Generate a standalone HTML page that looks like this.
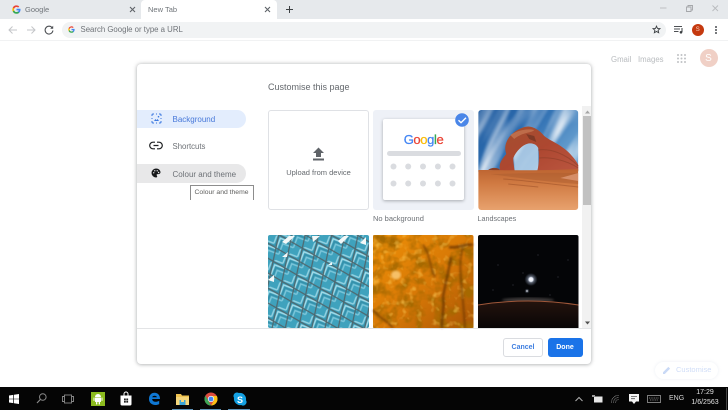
<!DOCTYPE html>
<html><head><meta charset="utf-8">
<style>
*{box-sizing:border-box}
html,body{margin:0;padding:0;width:728px;height:410px;overflow:hidden;background:#fff;font-family:"Liberation Sans",sans-serif;color:#5f6368}
#w{position:absolute;left:0;top:0;width:728px;height:410px;overflow:hidden;background:#fff;filter:blur(.3px)}
.a{position:absolute}
.t{position:absolute;white-space:nowrap;line-height:12px}
svg{position:absolute;overflow:visible}
</style></head><body><div id="w">
<div class="a" style="left:0;top:0;width:728px;height:19px;background:#e6e9ec"></div>
<div class="a" style="left:141px;top:0;width:136px;height:19px;background:#fff;border-radius:4px 4px 0 0"></div>
<div class="a" style="left:0;top:19px;width:728px;height:22px;background:#fff;border-bottom:1px solid #f1f2f3"></div>
<div class="a" style="left:62px;top:22px;width:604px;height:15.500px;background:#f1f3f4;border-radius:8px"></div>

<svg style="left:12px;top:5px" width="9" height="9" viewBox="0 0 18 18"><path d="M17 9.200c0-.6-.1-1.200-.2-1.700H9v3.300h4.500a3.800 3.800 0 0 1-1.700 2.500v2.100h2.700C16.100 13.900 17 11.800 17 9.200z" fill="#4285f4"/><path d="M9 17.500c2.300 0 4.200-.8 5.500-2.100l-2.700-2.100c-.7.500-1.700.8-2.800.8-2.200 0-4-1.500-4.700-3.400H1.500v2.200A8.500 8.500 0 0 0 9 17.500z" fill="#34a853"/><path d="M4.300 10.700a5 5 0 0 1 0-3.300V5.200H1.500a8.500 8.500 0 0 0 0 7.700z" fill="#fbbc05"/><path d="M9 3.900c1.200 0 2.300.4 3.200 1.300l2.400-2.400A8.500 8.500 0 0 0 1.500 5.200l2.800 2.200C5 5.400 6.800 3.900 9 3.900z" fill="#ea4335"/></svg>
<div class="t" style="left:25px;top:3.500px;font-size:7.500px;color:#70757a">Google</div>
<svg style="left:129px;top:6px" width="7" height="7" viewBox="0 0 7 7"><path d="M1 1l5 5M6 1L1 6" stroke="#5f6368" stroke-width="1.100"/></svg>
<div class="t" style="left:148px;top:3.500px;font-size:7.500px;color:#70757a">New Tab</div>
<svg style="left:264px;top:6px" width="7" height="7" viewBox="0 0 7 7"><path d="M1 1l5 5M6 1L1 6" stroke="#5f6368" stroke-width="1.100"/></svg>
<svg style="left:285px;top:5px" width="9" height="9" viewBox="0 0 9 9"><path d="M4.500 1v7M1 4.500h7" stroke="#3c4043" stroke-width="1"/></svg>

<svg style="left:660px;top:4px" width="60" height="10" viewBox="0 0 60 10"><path d="M0 4h6.500" stroke="#b9bbbe" stroke-width=".9"/><path d="M26.500 3h4.500v4.500h-4.500zM28 3V1.500h4.500V6H31" fill="none" stroke="#a4a6a9" stroke-width=".9"/><path d="M52.500 1.500l5.500 5.500M58 1.500l-5.500 5.500" stroke="#b9bbbe" stroke-width=".9"/></svg>

<svg style="left:8px;top:25px" width="10" height="10" viewBox="0 0 10 10"><path d="M9 5H1.500M4.500 1.500L1 5l3.500 3.500" fill="none" stroke="#c3c5c8" stroke-width="1"/></svg>
<svg style="left:26px;top:25px" width="10" height="10" viewBox="0 0 10 10"><path d="M1 5h7.500M5.500 1.500L9 5 5.500 8.500" fill="none" stroke="#c3c5c8" stroke-width="1"/></svg>
<svg style="left:44px;top:25px" width="10" height="10" viewBox="0 0 10 10"><path d="M8.300 3A3.900 3.900 0 1 0 8.900 5.500" fill="none" stroke="#4d5054" stroke-width="1.100"/><path d="M9.200 .8v3H6.200z" fill="#4d5054"/></svg>
<svg style="left:68px;top:26px" width="7" height="7" viewBox="0 0 18 18"><path d="M17 9.200c0-.6-.1-1.200-.2-1.700H9v3.300h4.500a3.800 3.800 0 0 1-1.700 2.500v2.100h2.700C16.100 13.900 17 11.800 17 9.200z" fill="#4285f4"/><path d="M9 17.500c2.300 0 4.200-.8 5.500-2.100l-2.700-2.100c-.7.500-1.700.8-2.800.8-2.200 0-4-1.500-4.700-3.400H1.500v2.200A8.500 8.500 0 0 0 9 17.500z" fill="#34a853"/><path d="M4.300 10.700a5 5 0 0 1 0-3.300V5.200H1.500a8.500 8.500 0 0 0 0 7.700z" fill="#fbbc05"/><path d="M9 3.900c1.200 0 2.300.4 3.200 1.300l2.400-2.400A8.500 8.500 0 0 0 1.500 5.200l2.800 2.200C5 5.400 6.800 3.900 9 3.900z" fill="#ea4335"/></svg>
<div class="t" style="left:80.500px;top:24px;font-size:7.800px;color:#6f7378">Search Google or type a URL</div>
<svg style="left:652px;top:25px" width="9" height="9" viewBox="0 0 24 24"><path d="M12 3l2.700 6.100 6.600.6-5 4.400 1.500 6.500L12 17.200l-5.800 3.400 1.500-6.500-5-4.400 6.600-.6z" fill="none" stroke="#3c4043" stroke-width="2.400"/></svg>
<svg style="left:674px;top:25px" width="10" height="9" viewBox="0 0 10 9"><path d="M0 1.500h8M0 4h6M0 6.500h4.500" stroke="#4d5054" stroke-width="1"/><path d="M8 3v4" stroke="#3c4043" stroke-width="1"/><circle cx="7" cy="7.300" r="1.300" fill="#3c4043"/></svg>
<div class="a" style="left:691.500px;top:23.500px;width:12.500px;height:12.500px;border-radius:50%;background:#c5390f"></div>
<div class="t" style="left:691.500px;top:24px;width:12.500px;text-align:center;font-size:6px;color:#f6d6c8">S</div>
<div class="a" style="left:714.500px;top:26px;width:2px;height:2px;border-radius:50%;background:#4d5054;box-shadow:0 3px 0 #4d5054,0 6px 0 #4d5054"></div>

<div class="t" style="left:611px;top:53.500px;font-size:7.800px;color:#b9bcbf">Gmail</div>
<div class="t" style="left:638px;top:53.500px;font-size:7.800px;color:#b9bcbf">Images</div>
<svg style="left:677px;top:54px" width="9" height="9" viewBox="0 0 9 9" fill="#c0c2c5"><circle cx="1" cy="1" r="1"/><circle cx="4.500" cy="1" r="1"/><circle cx="8" cy="1" r="1"/><circle cx="1" cy="4.500" r="1"/><circle cx="4.500" cy="4.500" r="1"/><circle cx="8" cy="4.500" r="1"/><circle cx="1" cy="8" r="1"/><circle cx="4.500" cy="8" r="1"/><circle cx="8" cy="8" r="1"/></svg>
<div class="a" style="left:699.500px;top:49px;width:18px;height:18px;border-radius:50%;background:#f0d0c6"></div>
<div class="t" style="left:699.500px;top:52.500px;width:18px;text-align:center;font-size:10px;color:#fff">S</div>

<div class="a" style="left:655px;top:361.500px;width:63px;height:17px;border-radius:9px;background:#fff;box-shadow:0 0 3px rgba(190,200,220,.3)"></div>
<svg style="left:663px;top:365.500px" width="8" height="8" viewBox="0 0 9 9"><path d="M0 9V7L6 1l2 2-6 6z" fill="#c9d9f6"/></svg>
<div class="t" style="left:676px;top:364px;font-size:7.500px;color:#d0ddf7">Customise</div>

<!-- Dialog -->
<div class="a" style="left:137px;top:64px;width:454px;height:299.500px;background:#fff;border-radius:4px;box-shadow:0 0 4px rgba(60,64,67,.35),0 1px 3px rgba(60,64,67,.15)"></div>
<div class="t" style="left:268px;top:81px;font-size:9px;color:#65696e">Customise this page</div>

<div class="a" style="left:137px;top:109.500px;width:109px;height:18.500px;background:#e3edfd;border-radius:0 10px 10px 0"></div>
<svg style="left:150.500px;top:113px" width="11" height="11" viewBox="0 0 11 11"><path d="M3 1H2a1 1 0 0 0-1 1v1M8 1h1a1 1 0 0 1 1 1v1M3 10H2a1 1 0 0 1-1-1V8M8 10h1a1 1 0 0 0 1-1V8M5 1h1M5 10h1M1 5v1M10 5v1" fill="none" stroke="#3b78e0" stroke-width="1"/><path d="M3 8l1.500-2 1 1.200L6.500 6 8 8z" fill="#3b78e0"/><circle cx="7.500" cy="3.700" r=".8" fill="#3b78e0"/></svg>
<div class="t" style="left:172.500px;top:114px;font-size:8px;color:#4778d9">Background</div>

<svg style="left:150px;top:141px" width="12" height="9" viewBox="0 0 12 9"><path d="M5 1.200H3a3.300 3.300 0 0 0 0 6.600h2M7 1.200h2a3.300 3.300 0 0 1 0 6.600H7M3.500 4.500h5" fill="none" stroke="#1f2123" stroke-width="1.200"/></svg>
<div class="t" style="left:172.500px;top:140.500px;font-size:7.800px;color:#6d7176">Shortcuts</div>

<div class="a" style="left:137px;top:164px;width:109px;height:18.500px;background:#e8e8e9;border-radius:0 10px 10px 0"></div>
<svg style="left:151px;top:168px" width="10" height="10" viewBox="0 0 10 10"><path d="M5 .5a4.500 4.500 0 0 0 0 9c.8 0 1.200-.5 1.200-1 0-.8-.6-.9-.6-1.500 0-.5.4-.9 1-.9h1.100c1 0 1.800-.8 1.800-1.800C9.500 2.200 7.500.5 5 .5z" fill="#17181a"/><circle cx="2.700" cy="4.800" r=".7" fill="#e8e8e9"/><circle cx="3.800" cy="2.800" r=".7" fill="#e8e8e9"/><circle cx="6.200" cy="2.800" r=".7" fill="#e8e8e9"/><circle cx="7.600" cy="4.500" r=".7" fill="#e8e8e9"/></svg>
<div class="t" style="left:172.500px;top:169px;font-size:8px;color:#6d7176">Colour and theme</div>
<div class="a" style="left:190px;top:185px;width:64px;height:15px;background:#fff;border:1px solid #8d8d8d;border-bottom:none"></div>
<div class="t" style="left:194.500px;top:186.500px;font-size:6.800px;color:#60605f">Colour and theme</div>

<!-- Upload -->
<div class="a" style="left:268px;top:109.500px;width:101px;height:100px;background:#fff;border:1px solid #dfe1e5;border-radius:3px"></div>
<svg style="left:312px;top:147px" width="13" height="14" viewBox="0 0 13 14"><path d="M6.500 .5L12 6H9v4H4V6H1z" fill="#5f6368"/><rect x="1" y="11.500" width="11" height="2" fill="#5f6368"/></svg>
<div class="t" style="left:268px;top:167px;width:101px;text-align:center;font-size:7.500px;color:#65696e">Upload from device</div>

<!-- No background -->
<div class="a" style="left:373px;top:109.500px;width:100.500px;height:100px;background:#eef1f7;border-radius:3px"></div>
<div class="a" style="left:383px;top:118.500px;width:81px;height:81px;background:#fff;border-radius:2px;box-shadow:0 1px 3px rgba(60,64,67,.4)"></div>
<div class="t" style="left:383px;top:131.500px;width:81px;text-align:center;font-size:13px;line-height:15px;letter-spacing:-.4px;-webkit-text-stroke:.25px currentColor"><span style="color:#4285f4">G</span><span style="color:#ea4335">o</span><span style="color:#fbbc05">o</span><span style="color:#4285f4">g</span><span style="color:#34a853">l</span><span style="color:#ea4335">e</span></div>
<div class="a" style="left:387px;top:151px;width:73.500px;height:5px;background:#dadce0;border-radius:3px"></div>
<svg style="left:390px;top:163px" width="66" height="24" viewBox="0 0 66 24" fill="#dadce0"><circle cx="3.500" cy="3.500" r="3"/><circle cx="18.200" cy="3.500" r="3"/><circle cx="33" cy="3.500" r="3"/><circle cx="47.900" cy="3.500" r="3"/><circle cx="62.500" cy="3.500" r="3"/><circle cx="3.500" cy="20.500" r="3"/><circle cx="18.200" cy="20.500" r="3"/><circle cx="33" cy="20.500" r="3"/><circle cx="47.900" cy="20.500" r="3"/><circle cx="62.500" cy="20.500" r="3"/></svg>
<svg style="left:454.500px;top:113px" width="14" height="14" viewBox="0 0 14 14"><circle cx="7" cy="7" r="6.800" fill="#4a86e8"/><path d="M3.500 7.300l2.500 2.400 5-5" fill="none" stroke="#fff" stroke-width="1.400"/></svg>
<div class="t" style="left:373px;top:212.500px;font-size:7.500px;color:#6d7176">No background</div>

<!-- Landscapes -->
<svg style="left:477.500px;top:109.500px" width="100.500" height="100" viewBox="0 0 100 100">
<defs>
<linearGradient id="sky" x1="0" y1="0" x2="1" y2=".6"><stop offset="0" stop-color="#1f5a9e"/><stop offset=".5" stop-color="#2f6fb2"/><stop offset="1" stop-color="#6ba3d2"/></linearGradient>
<linearGradient id="sand" x1="0" y1="0" x2="0" y2="1"><stop offset="0" stop-color="#bd6431"/><stop offset=".35" stop-color="#d07a42"/><stop offset="1" stop-color="#e8a26e"/></linearGradient>
<linearGradient id="rock" x1="0" y1="0" x2="1" y2="1"><stop offset="0" stop-color="#a2502f"/><stop offset=".5" stop-color="#ad4730"/><stop offset="1" stop-color="#bb5640"/></linearGradient>
<clipPath id="r3"><rect width="100" height="100" rx="3"/></clipPath>
<filter id="cl" x="0" y="0" width="100%" height="100%"><feTurbulence type="fractalNoise" baseFrequency=".014 .07" numOctaves="2" seed="4"/><feColorMatrix values="0 0 0 0 1  0 0 0 0 1  0 0 0 0 1  2 0 0 0 -.8"/></filter>
<filter id="bs"><feGaussianBlur stdDeviation=".7"/></filter>
</defs>
<g clip-path="url(#r3)">
<rect width="100" height="62" fill="url(#sky)"/>
<g transform="rotate(-62 50 30)" filter="url(#bs)"><rect x="-30" y="-50" width="160" height="170" filter="url(#cl)"/></g>
<rect x="36" y="33" width="24" height="28" fill="#c5dcef" opacity=".75"/>
<path d="M22 61C20 54 23 50 28 44C26 38 27 33 31 27C36 21 43 17 50 16.500C56 17 61 20 66 26C72 31 80 33 90 42C95 47 99 52 101 57V61H59C61 54 61 44 60 38C58 34 54 33 50 33.500C44 35 38 41 35 48C35 53 36 58 36.500 61z" fill="url(#rock)"/>
<path d="M32 25C38 21 48 18 56 20C54 23 44 22 36 29z" fill="#c77a55" opacity=".7"/>
<path d="M48 24l8 2 2 6-7-3z" fill="#6d3322" opacity=".7"/>
<path d="M60 40C72 38 88 44 100 56M61 48C72 47 88 50 100 58" stroke="#8c3d28" stroke-width="1" fill="none" opacity=".6"/>
<path d="M10 60c2-2 7-3 11-1l1 2z" fill="#8a4028"/>
<path d="M0 60C20 60 60 61 100 59V100H0z" fill="url(#sand)"/>
<path d="M12 64C30 64 55 62 100 63L100 74C70 72 40 68 12 64z" fill="#a85a2e" opacity=".45"/>
<path d="M25 69C45 70 70 74 100 77M30 74C40 75 50 76 60 77" stroke="#9c5028" stroke-width="1" fill="none" opacity=".55"/>
<path d="M82 68l18-5v8z" fill="#e9a98a" opacity=".6"/>
</g></svg>
<div class="t" style="left:477.500px;top:212.500px;font-size:7.200px;color:#6d7176">Landscapes</div>

<!-- Blue pattern -->
<svg style="left:268px;top:235px" width="101" height="93" viewBox="0 0 101 93">
<defs>
<pattern id="dia" width="16" height="22" patternUnits="userSpaceOnUse" patternTransform="rotate(-24) translate(2 4)">
<rect width="16" height="22" fill="#3fa2bd"/>
<g fill="none" stroke-width="1.500">
<path d="M0 6L8-2 16 6" stroke="#93d2e2"/><path d="M0 9L8 1 16 9" stroke="#358fa9"/><path d="M0 12L8 4 16 12" stroke="#a5dce9"/><path d="M0 15L8 7 16 15" stroke="#358fa9"/><path d="M0 18L8 10 16 18" stroke="#7cc6da"/>
</g>
<path d="M0 11L8 0 16 11 8 22z" fill="none" stroke="#4f676d" stroke-width="1.200"/>
<path d="M0-11L8 0M16-11L8 0M0 33L8 22M16 33L8 22" stroke="#4f676d" stroke-width="1.200"/>
</pattern>
<filter id="org" x="0" y="0" width="100%" height="100%"><feTurbulence type="fractalNoise" baseFrequency=".08" numOctaves="3" seed="8"/><feColorMatrix values="0 0 0 0 .38  0 0 0 0 .14  0 0 0 0 0  3 0 0 0 -1.250"/></filter>
<filter id="org2" x="0" y="0" width="100%" height="100%"><feTurbulence type="fractalNoise" baseFrequency=".14" numOctaves="2" seed="3"/><feColorMatrix values="0 0 0 0 .98  0 0 0 0 .62  0 0 0 0 .1  1.800 0 0 0 -1"/></filter>
<filter id="bl"><feGaussianBlur stdDeviation="1.100"/></filter>
<radialGradient id="glow"><stop offset="0" stop-color="#fff"/><stop offset=".3" stop-color="#e7ecf7"/><stop offset=".5" stop-color="#a8b4cc" stop-opacity=".5"/><stop offset="1" stop-color="#8fa0c0" stop-opacity="0"/></radialGradient>
<linearGradient id="or" x1="0" y1="0" x2="1" y2="1"><stop offset="0" stop-color="#ee9008"/><stop offset=".55" stop-color="#d67706"/><stop offset="1" stop-color="#a85404"/></linearGradient>
<linearGradient id="gd" x1="0" y1="0" x2="0" y2="1"><stop offset="0" stop-color="#24130d"/><stop offset="1" stop-color="#080506"/></linearGradient>
</defs>
<rect width="101" height="93" rx="2" fill="url(#dia)"/>
<path d="M14 7l7-6h6l-9 8zM44 1h8l-7 6zM70 6l6-5h5l-8 8zM92 8l6-6v8zM0 45l6-5 0 7zM14 22l6-5-1 5zM60 30l4-3v3z" fill="#f4f8f8"/>
</svg>

<!-- Orange -->
<svg style="left:373px;top:235px" width="100.500" height="93" viewBox="0 0 100.500 93">
<rect width="100.500" height="93" rx="2" fill="url(#or)"/>
<rect width="100.500" height="93" filter="url(#org)"/>
<rect width="100.500" height="93" filter="url(#org2)"/>
<g fill="none" stroke="#5a2a04" filter="url(#bl)" opacity=".75"><path d="M78 22C76 35 72 50 70 62C72 72 68 84 69 93" stroke-width="2.200"/><path d="M90 12C84 30 90 55 92 93" stroke-width="1.500"/><path d="M50 10C58 20 56 32 62 42" stroke-width="1.500"/><path d="M0 75C8 84 14 86 20 93" stroke-width="1.500"/><path d="M76 12C84 14 92 8 100 10" stroke-width="2.500"/></g>
<ellipse cx="23" cy="40" rx="5" ry="4.500" fill="#f6c067" filter="url(#bl)"/>
</svg>

<!-- Dark -->
<svg style="left:477.500px;top:235px" width="100.500" height="93" viewBox="0 0 100.500 93">
<rect width="100.500" height="93" rx="2" fill="#040507"/>
<g fill="#7f889c"><circle cx="20" cy="30" r=".4"/><circle cx="35" cy="50" r=".4"/><circle cx="60" cy="20" r=".4"/><circle cx="80" cy="42" r=".4"/><circle cx="45" cy="38" r=".4"/><circle cx="72" cy="60" r=".4"/><circle cx="15" cy="55" r=".4"/><circle cx="90" cy="25" r=".4"/></g>
<circle cx="53" cy="44.500" r="6.500" fill="url(#glow)"/>
<circle cx="49" cy="56" r="2.500" fill="url(#glow)" opacity=".7"/>
<ellipse cx="50" cy="65" rx="26" ry="2.500" fill="#b8aaa6" opacity=".3" filter="url(#bl)"/>
<path d="M0 70Q50 62 100.500 70V93H0z" fill="url(#gd)"/>
<path d="M0 70Q50 62 100.500 70" fill="none" stroke="#a0583a" stroke-width="1"/>
</svg>

<!-- Scrollbar -->
<div class="a" style="left:582px;top:106px;width:9px;height:222px;background:#f1f1f1"></div>
<div class="a" style="left:583px;top:116px;width:8px;height:89px;background:#c1c1c1"></div>
<svg style="left:584.500px;top:109.500px" width="5" height="4"><path d="M2.500 0.500L5 3.500H0z" fill="#a5a5a5"/></svg>
<svg style="left:584.500px;top:321px" width="5" height="4"><path d="M0 .5H5L2.500 3.500z" fill="#505050"/></svg>

<!-- footer -->
<div class="a" style="left:137px;top:328px;width:454px;height:1px;background:#e3e4e6"></div>
<div class="a" style="left:503px;top:337.500px;width:40px;height:19px;background:#fff;border:1px solid #dadce0;border-radius:3px"></div>
<div class="t" style="left:503px;top:341.500px;width:40px;text-align:center;font-size:7px;font-weight:bold;color:#3f7fe0">Cancel</div>
<div class="a" style="left:547.500px;top:337.500px;width:35px;height:19px;background:#1a73e8;border-radius:3px"></div>
<div class="t" style="left:547.500px;top:341.500px;width:35px;text-align:center;font-size:7px;font-weight:bold;color:#fff">Done</div>

<!-- Taskbar -->
<div class="a" style="left:0;top:387px;width:728px;height:23px;background:#050505"></div>
<svg style="left:9px;top:394px" width="10" height="10" viewBox="0 0 10 10" fill="#fff"><path d="M0 1.500L4.300.9v3.800H0zM5 .8L10 0v4.700H5zM0 5.300h4.300v3.800L0 8.500zM5 5.300h5V10L5 9.200z"/></svg>
<svg style="left:36px;top:393px" width="11" height="11" viewBox="0 0 11 11"><circle cx="6.800" cy="4" r="3.300" fill="none" stroke="#8a8a8a" stroke-width="1"/><path d="M4.300 6.500L1 10" stroke="#8a8a8a" stroke-width="1.200"/></svg>
<svg style="left:62px;top:394px" width="12" height="10" viewBox="0 0 12 10" fill="none" stroke="#8a8a8a" stroke-width=".9"><rect x="2.500" y="1" width="7" height="8"/><path d="M2.500 2.500H.5v5h2M9.500 2.500h2v5h-2"/></svg>
<div class="a" style="left:90.500px;top:392px;width:14px;height:14px;background:#8cbb1e"></div>
<svg style="left:92.500px;top:393px" width="10" height="12" viewBox="0 0 10 12" fill="#fff"><path d="M2 4a3 3 0 0 1 6 0z"/><rect x="2" y="4.500" width="6" height="4.500" rx=".5"/><rect x=".5" y="4.500" width="1" height="3.500" rx=".5"/><rect x="8.500" y="4.500" width="1" height="3.500" rx=".5"/><rect x="3" y="9" width="1.300" height="2.500" rx=".5"/><rect x="5.700" y="9" width="1.300" height="2.500" rx=".5"/></svg>
<svg style="left:119.500px;top:392px" width="12" height="14" viewBox="0 0 12 14"><path d="M4 3.500V2a2 2 0 0 1 4 0v1.500" fill="none" stroke="#fff" stroke-width="1"/><path d="M.5 3.500h11V12a1.500 1.500 0 0 1-1.500 1.500H2A1.500 1.500 0 0 1 .5 12z" fill="#fff"/><path d="M4 6.500h1.800v1.800H4zM6.300 6.500h1.800v1.800H6.300zM4 8.800h1.800v1.800H4zM6.300 8.800h1.800v1.800H6.300z" fill="#222"/></svg>
<svg style="left:148px;top:392px" width="13" height="14" viewBox="0 0 13 14"><path d="M1 7C1 3 3.500.8 6.500.8c3.500 0 5.500 2.500 5.500 6.200H4.200c0 2.800 3.800 3.700 7 1.800v3.300c-4 2-10.200.7-10.200-5.100zM4.200 5.200h4.700C8.800 3.300 4.600 3.200 4.200 5.200z" fill="#0f78d4"/></svg>
<svg style="left:176px;top:393px" width="13" height="12" viewBox="0 0 13 12"><path d="M0 1h5l1 1.500h7V12H0z" fill="#f0c350"/><rect x="0" y="4" width="13" height="8" fill="#f5d67b"/><rect x="3.500" y="7" width="6" height="5" fill="#3ba5d8"/><rect x="5" y="7" width="3" height="2" fill="#f5d67b"/></svg>
<svg style="left:204px;top:392px" width="14" height="14" viewBox="0 0 14 14"><circle cx="7" cy="7" r="6.500" fill="#dd4b3e"/><path d="M7 13.500A6.500 6.500 0 0 1 1.400 3.700L4.500 9z" fill="#3aa757"/><path d="M13.500 7A6.500 6.500 0 0 1 7 13.500L10 8.500 7 4h5.800c.5.900.7 2 .7 3z" fill="#fbc116"/><circle cx="7" cy="7" r="3.100" fill="#fff"/><circle cx="7" cy="7" r="2.400" fill="#4285f4"/></svg>
<svg style="left:233px;top:392px" width="14" height="14" viewBox="0 0 14 14"><path d="M4 .5a3.500 3.500 0 0 0-3 5.300 6.200 6.200 0 0 0 7.200 7.200A3.500 3.500 0 0 0 13 8.200 6.200 6.200 0 0 0 5.800 1 3.500 3.500 0 0 0 4 .5z" fill="#14a1e3"/></svg>
<div class="t" style="left:233px;top:393.500px;width:14px;text-align:center;font-size:9px;font-weight:bold;color:#fff">S</div>
<div class="a" style="left:172px;top:409px;width:21px;height:1px;background:#5f93b8"></div>
<div class="a" style="left:200px;top:409px;width:21px;height:1px;background:#5f93b8"></div>
<div class="a" style="left:228px;top:409px;width:22px;height:1px;background:#5f93b8"></div>

<svg style="left:575px;top:396px" width="8" height="6"><path d="M.5 5L4 1.500 7.500 5" fill="none" stroke="#b0b0b0" stroke-width="1"/></svg>
<svg style="left:592px;top:395px" width="11" height="8" viewBox="0 0 11 8"><rect x="2" y="1.500" width="8.500" height="6" fill="#e6e6e6"/><rect y="0" width="3" height="2" fill="#999"/></svg>
<svg style="left:611px;top:394px" width="9" height="10" viewBox="0 0 11 10" fill="none" stroke="#9a9a9a" stroke-width=".9" stroke-dasharray="1 .6"><path d="M.5 9.500A9 9 0 0 1 9.500.5M3 9.500A6.500 6.500 0 0 1 9.500 3M5.500 9.500a4 4 0 0 1 4-4"/></svg>
<svg style="left:629px;top:394px" width="10" height="11" viewBox="0 0 10 11"><path d="M0 0h10v7.500H7L5 10 3 7.500H0z" fill="#f4f4f4"/><path d="M2 2.500h6M2 4.700h4" stroke="#555" stroke-width=".8"/></svg>
<svg style="left:647px;top:395px" width="14" height="8" viewBox="0 0 14 8" fill="none" stroke="#9a9a9a" stroke-width=".8"><rect x=".5" y=".5" width="13" height="7"/><path d="M2 3h10M3 5h8" stroke-dasharray="1 .7"/></svg>
<div class="t" style="left:669px;top:393px;font-size:7px;color:#d6d6d6">ENG</div>
<div class="t" style="left:695px;top:387px;width:20px;text-align:center;font-size:7px;color:#e2e2e2">17:29</div>
<div class="t" style="left:688px;top:397px;width:34px;text-align:center;font-size:7px;color:#e2e2e2">1/6/2563</div>
<div class="a" style="left:725.500px;top:388px;width:1px;height:22px;background:#444"></div>
</div></body></html>
